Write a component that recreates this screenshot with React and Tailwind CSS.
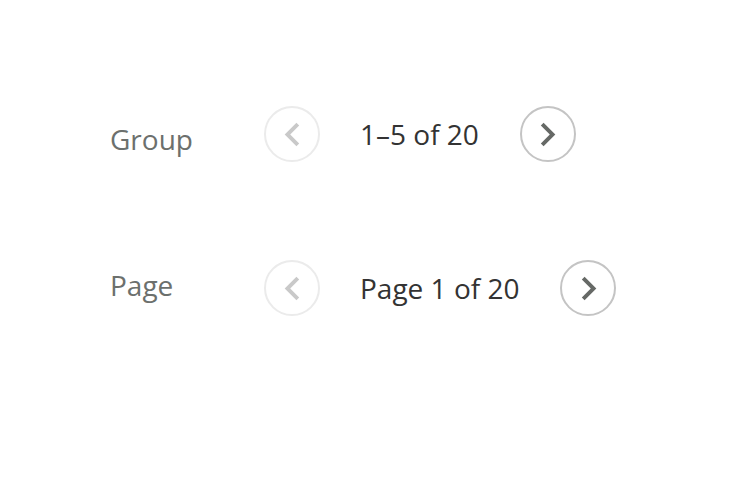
import React from 'react';

const ChevronLeft = ({ className }) => (
  <svg viewBox="0 0 24 24" width="47" height="47" className={className} fill="currentColor">
    <path d="M15.41 7.41L14 6l-6 6 6 6 1.41-1.41L10.83 12z" />
  </svg>
);

const ChevronRight = ({ className }) => (
  <svg viewBox="0 0 24 24" width="47" height="47" className={className} fill="currentColor">
    <path d="M10 6L8.59 7.41 13.17 12l-4.58 4.59L10 18l6-6z" />
  </svg>
);

const NavButton = ({ disabled, children }) => (
  <button
    type="button"
    disabled={disabled}
    className={
      disabled
        ? 'w-[56px] h-[56px] rounded-full border-2 border-[#ebebeb] flex items-center justify-center text-[#c9c9c9] shrink-0'
        : 'w-[56px] h-[56px] rounded-full border-2 border-[#c4c4c4] flex items-center justify-center text-[#666966] shrink-0'
    }
  >
    {children}
  </button>
);

const PagerRow = ({ label, labelClass, text }) => (
  <div className="flex items-center h-[56px]">
    <span className={'w-[154px] text-[28px] leading-none text-[#6c706d] shrink-0 ' + labelClass}>{label}</span>
    <NavButton disabled>
      <ChevronLeft />
    </NavButton>
    <span className="ml-[40px] mr-[41px] text-[28px] leading-none text-[#333333] whitespace-nowrap">{text}</span>
    <NavButton>
      <ChevronRight />
    </NavButton>
  </div>
);

export default function App() {
  return (
    <div
      className="w-[740px] h-[478px] bg-white pt-[106px] pl-[110px] flex flex-col gap-[98px]"
      style={{ fontFamily: '"Open Sans", sans-serif' }}
    >
      <PagerRow label="Group" labelClass="mt-[10px]" text="1–5 of 20" />
      <PagerRow label="Page" labelClass="mb-[6px]" text="Page 1 of 20" />
    </div>
  );
}
